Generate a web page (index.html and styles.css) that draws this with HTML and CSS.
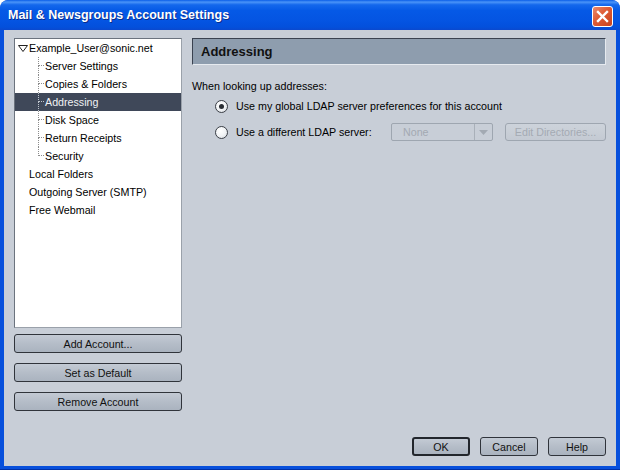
FILE: index.html
```html
<!DOCTYPE html>
<html lang="en">
<head>
    <meta charset="UTF-8">
    <title>Mail &amp; Newsgroups Account Settings</title>
    <link rel="stylesheet" href="styles.css">
</head>
<body>
    <div class="window">
        <div class="titlebar">
            <span class="title">Mail &amp; Newsgroups Account Settings</span>
            <div class="close-button">
                <svg width="13" height="13" viewBox="0 0 13 13">
                    <path d="M2 2 L11 11 M11 2 L2 11" stroke="#fff" stroke-width="2.4" stroke-linecap="square"/>
                </svg>
            </div>
        </div>

        <div class="client">
            <div class="sidebar">
                <div class="tree">
                    <div class="tree-row account">
                        <svg class="twisty" width="10" height="7" viewBox="0 0 10 7">
                            <path d="M0.5 0.5 H9.5 L5 6.5 Z" fill="none" stroke="#222" stroke-width="1"/>
                        </svg>
                        <span>Example_User@sonic.net</span>
                    </div>
                    <div class="tree-row child">
                        <span class="branch"><span class="up"></span><span class="down"></span></span>
                        <span>Server Settings</span>
                    </div>
                    <div class="tree-row child">
                        <span class="branch"><span class="up"></span><span class="down"></span></span>
                        <span>Copies &amp; Folders</span>
                    </div>
                    <div class="tree-row child selected">
                        <span class="branch"><span class="up"></span><span class="down"></span></span>
                        <span>Addressing</span>
                    </div>
                    <div class="tree-row child">
                        <span class="branch"><span class="up"></span><span class="down"></span></span>
                        <span>Disk Space</span>
                    </div>
                    <div class="tree-row child">
                        <span class="branch"><span class="up"></span><span class="down"></span></span>
                        <span>Return Receipts</span>
                    </div>
                    <div class="tree-row child last">
                        <span class="branch"><span class="up"></span><span class="down"></span></span>
                        <span>Security</span>
                    </div>
                    <div class="tree-row top">Local Folders</div>
                    <div class="tree-row top">Outgoing Server (SMTP)</div>
                    <div class="tree-row top">Free Webmail</div>
                </div>

                <div class="side-buttons">
                    <div class="button">Add Account...</div>
                    <div class="button">Set as Default</div>
                    <div class="button">Remove Account</div>
                </div>
            </div>

            <div class="panel">
                <div class="panel-header">Addressing</div>
                <div class="panel-body">
                    <p class="label">When looking up addresses:</p>
                    <div class="option">
                        <span class="radio checked"></span>
                        <span>Use my global LDAP server preferences for this account</span>
                    </div>
                    <div class="option">
                        <span class="radio"></span>
                        <span>Use a different LDAP server:</span>
                        <div class="dropdown disabled">
                            <span class="dropdown-value">None</span>
                            <span class="dropdown-arrow">
                                <svg width="9" height="5" viewBox="0 0 9 5"><path d="M0 0 H9 L4.5 5 Z" fill="#a3aab3"/></svg>
                            </span>
                        </div>
                        <div class="button small disabled">Edit Directories...</div>
                    </div>
                </div>
                <div class="dialog-buttons">
                    <div class="button default">OK</div>
                    <div class="button">Cancel</div>
                    <div class="button">Help</div>
                </div>
            </div>
        </div>
    </div>
</body>
</html>
```

FILE: styles.css
```css
body {
    margin: 0;
    background-color: #fff;
    font-family: 'Liberation Sans', Arial, sans-serif;
    font-size: 10.7px;
    color: #000;
}
.window {
    width: 620px;
    height: 470px;
    box-sizing: border-box;
    display: flex;
    flex-direction: column;
    background-color: #0850dc;
    border-radius: 8px 8px 0 0;
    border-bottom: 1px solid #0031a8;
    overflow: hidden;
}
.titlebar {
    height: 30px;
    flex-shrink: 0;
    display: flex;
    align-items: center;
    justify-content: space-between;
    padding: 0 7px 0 8px;
    background: linear-gradient(to bottom, #0a5ee8 0%, #4a94f8 7%, #1468ec 16%, #0559e6 35%, #0454e2 70%, #0350dc 90%, #0a49cf 100%);
    border-radius: 8px 8px 0 0;
}
.title {
    color: #fff;
    font-weight: bold;
    font-size: 12.5px;
    text-shadow: 1px 1px 0 #0a2c8a;
}
.close-button {
    width: 19px;
    height: 19px;
    margin-top: 2px;
    display: flex;
    align-items: center;
    justify-content: center;
    border: 1px solid #fff;
    border-radius: 3px;
    background: linear-gradient(135deg, #ea8a6c 0%, #de5a34 45%, #c8431e 100%);
}
.client {
    flex: 1;
    display: flex;
    gap: 10px;
    margin: 0 4px 3px 4px;
    padding: 8px 10px 10px 10px;
    background-color: #c8ced7;
}

/* arbol de cuentas */
.sidebar {
    width: 168px;
    display: flex;
    flex-direction: column;
}
.tree {
    height: 290px;
    box-sizing: border-box;
    background-color: #fff;
    border: 1px solid #6b737e;
    border-right-color: #9aa1aa;
    border-bottom-color: #9aa1aa;
}
.tree-row {
    height: 18px;
    display: flex;
    align-items: center;
    white-space: nowrap;
}
.tree-row.account {
    padding-left: 3px;
}
.twisty {
    margin-right: 1px;
}
.tree-row.top {
    padding-left: 14px;
}
.branch {
    display: flex;
    flex-direction: column;
    width: 6px;
    height: 18px;
    margin-left: 23px;
    margin-right: 1px;
}
.branch .up {
    height: 9px;
    box-sizing: border-box;
    border-left: 1px dotted #8c8c8c;
    border-bottom: 1px dotted #8c8c8c;
}
.branch .down {
    height: 9px;
    border-left: 1px dotted #8c8c8c;
}
.tree-row.last .branch .down {
    border-left: none;
}
.tree-row.selected {
    background-color: #3f4859;
    color: #f0f2f5;
}
.tree-row.selected .branch .up,
.tree-row.selected .branch .down {
    border-color: #c0c6ce;
}

.side-buttons {
    display: flex;
    flex-direction: column;
    gap: 10px;
    margin-top: 6px;
}
.button {
    height: 19px;
    box-sizing: border-box;
    display: flex;
    align-items: center;
    justify-content: center;
    border: 1px solid #30343b;
    border-radius: 3px;
    background: linear-gradient(to bottom, #c3cad4 0%, #b5bdc8 50%, #aab3bf 100%);
    color: #111;
}
.button.default {
    border: 2px solid #22262c;
}
.button.disabled {
    border-color: #9ea6b0;
    color: #a4aab3;
    background: linear-gradient(to bottom, #cdd3db 0%, #c4cad3 100%);
}

/* panel derecho */
.panel {
    flex: 1;
    display: flex;
    flex-direction: column;
}
.panel-header {
    height: 27px;
    box-sizing: border-box;
    display: flex;
    align-items: center;
    padding-left: 8px;
    border: 1px solid #3a4250;
    border-right-color: #e6eaef;
    border-bottom-color: #e6eaef;
    background-color: #8e9dae;
    font-weight: bold;
    font-size: 13px;
    color: #111;
}
.panel-body {
    padding-top: 14px;
}
.label {
    margin: 0;
    line-height: 14px;
}
.option {
    display: flex;
    align-items: center;
    height: 18px;
    padding-left: 23px;
    margin-top: 4px;
}
.option + .option {
    margin-top: 8px;
}
.radio {
    width: 13px;
    height: 13px;
    box-sizing: border-box;
    margin-right: 8px;
    border: 1px solid #3b3f46;
    border-radius: 50%;
    background: radial-gradient(circle at 40% 35%, #ffffff 0%, #f2f4f6 50%, #d3d8de 100%);
    display: flex;
    align-items: center;
    justify-content: center;
}
.radio.checked::after {
    content: '';
    width: 5px;
    height: 5px;
    border-radius: 50%;
    background-color: #2a2e34;
}
.dropdown {
    width: 102px;
    height: 18px;
    box-sizing: border-box;
    margin-left: auto;
    display: flex;
    border: 1px solid #9ea6b0;
    border-radius: 2px;
    background-color: #c8ced7;
}
.dropdown-value {
    flex: 1;
    display: flex;
    align-items: center;
    padding-left: 11px;
    color: #a3a9b2;
}
.dropdown-arrow {
    width: 17px;
    display: flex;
    align-items: center;
    justify-content: center;
    border-left: 1px solid #a9b0b9;
}
.button.small {
    width: 101px;
    height: 18px;
    margin-left: 12px;
}
.dialog-buttons {
    margin-top: auto;
    display: flex;
    justify-content: flex-end;
    gap: 10px;
}
.dialog-buttons .button {
    width: 58px;
}
```
